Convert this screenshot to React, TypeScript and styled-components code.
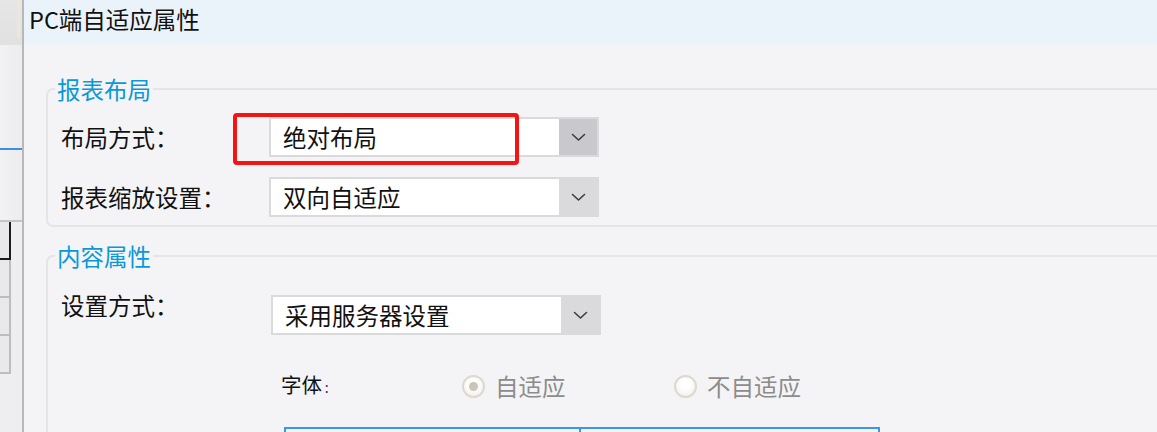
import React from "react";
import styled, { createGlobalStyle } from "styled-components";

const GlobalStyle = createGlobalStyle`
  html, body {
    margin: 0;
    padding: 0;
    width: 1157px;
    height: 432px;
    overflow: hidden;
    background: #f4f4f6;
  }
  body {
    font-family: "Noto Sans CJK SC", "Noto Sans", sans-serif;
  }
  #root {
    height: 100%;
  }
`;

const Page = styled.div`
  display: flex;
  width: 1157px;
  height: 432px;
  overflow: hidden;
`;

/* ---------- background application strip on the left ---------- */
const LeftStrip = styled.div`
  width: 22px;
  flex-shrink: 0;
  display: flex;
  flex-direction: column;
  background: #eeeef0;
`;

const StripTop = styled.div`
  height: 45px;
  display: flex;
  padding-left: 17px;
  background: linear-gradient(#e6e6e6, #e1e1e1);
  box-sizing: border-box;
`;

const TanMark = styled.div`
  width: 3px;
  height: 38px;
  background: #ece7d7;
`;

const StripPane = styled.div<{ $h: number }>`
  height: ${(p) => p.$h}px;
  background: linear-gradient(90deg, #f2f2f3, #ececee);
`;

const StripRule = styled.div<{ $color: string }>`
  height: 2px;
  background: ${(p) => p.$color};
`;

const StripCells = styled.div`
  display: flex;
  flex-direction: column;
  width: 11px;
`;

const StripCell = styled.div<{ $dark?: boolean }>`
  height: 38px;
  box-sizing: border-box;
  border-right: 2px solid ${(p) => (p.$dark ? "#1c1c1c" : "#bdbdbf")};
  border-bottom: 2px solid ${(p) => (p.$dark ? "#1c1c1c" : "#bdbdbf")};
  background: #e9e9eb;
`;

/* ---------- dialog ---------- */
const Dialog = styled.div`
  flex: 1;
  display: flex;
  flex-direction: column;
  border-left: 2px solid #b8b8ba;
  background: #f4f4f6;
  min-width: 0;
`;

const TitleBar = styled.div`
  height: 45px;
  flex-shrink: 0;
  box-sizing: border-box;
  padding: 6px 0 0 5px;
  background: #ebf3fa;
  font-size: 23.5px;
  line-height: 26px;
  color: #111;
`;

const Body = styled.div`
  display: flex;
  flex-direction: column;
  padding: 31px 0 0 22px;
`;

const GroupBox = styled.fieldset<{ $pt: number; $pb: number; $mt: number }>`
  margin: ${(p) => p.$mt}px 0 0 0;
  min-width: 0;
  border: 2px solid #e5e5e8;
  border-right: none;
  border-radius: 7px 0 0 7px;
  padding: ${(p) => p.$pt}px 0 ${(p) => p.$pb}px 13px;
  display: flex;
  flex-direction: column;
`;

const Legend = styled.legend`
  margin-left: -6px;
  padding: 0 2px;
  font-size: 23.5px;
  line-height: 26px;
  color: #0a98d8;
`;

const FormRow = styled.div<{ $labelWidth: number; $gap?: number; $top?: boolean }>`
  display: grid;
  grid-template-columns: ${(p) => p.$labelWidth}px 330px;
  align-items: ${(p) => (p.$top ? "start" : "center")};
  margin-top: ${(p) => p.$gap ?? 0}px;
`;

const Label = styled.div<{ $shift?: number }>`
  font-size: 23.5px;
  line-height: 26px;
  color: #111;
  white-space: nowrap;
  margin-top: ${(p) => p.$shift ?? 0}px;
`;

const Combo = styled.div`
  position: relative;
  display: flex;
  height: 40px;
  box-sizing: border-box;
  border: 2px solid #dadadd;
  background: #fff;
`;

const ComboText = styled.div`
  flex: 1;
  padding-left: 12px;
  font-size: 23.5px;
  line-height: 36px;
  color: #111;
  white-space: nowrap;
`;

const ComboButton = styled.div<{ $active?: boolean }>`
  width: 38px;
  display: flex;
  align-items: center;
  justify-content: center;
  background: ${(p) => (p.$active ? "#c9c9cd" : "#dadadd")};
`;

/* annotation drawn over the first combo box */
const RedMark = styled.div`
  position: absolute;
  left: -38px;
  top: -6px;
  width: 286px;
  height: 52px;
  box-sizing: border-box;
  border: 4px solid #f51414;
  border-radius: 4px;
  pointer-events: none;
`;

const FontRow = styled.div`
  display: flex;
  align-items: center;
  height: 26px;
  margin: 38px 0 0 220px;
`;

const FontLabel = styled.div`
  width: 181px;
  font-size: 20.5px;
  line-height: 26px;
  color: #111;
`;

const Colon = styled.span`
  color: #6a2c6a;
  font-family: "DejaVu Sans", sans-serif;
  font-size: 16px;
  margin-left: 2px;
`;

const RadioItem = styled.div`
  width: 212px;
  display: flex;
  align-items: center;
  gap: 10px;
`;

const RadioCircle = styled.div<{ $checked?: boolean }>`
  width: 23px;
  height: 23px;
  box-sizing: border-box;
  border-radius: 50%;
  border: 2px solid #ddd9ce;
  background: radial-gradient(circle at 50% 40%, #ffffff 30%, #ecebe6 100%);
  display: flex;
  align-items: center;
  justify-content: center;
  &::after {
    content: "";
    display: ${(p) => (p.$checked ? "block" : "none")};
    width: 9px;
    height: 9px;
    border-radius: 50%;
    background: #c9c5b9;
  }
`;

const RadioText = styled.span`
  font-size: 23.5px;
  line-height: 26px;
  color: #8c8c8c;
  white-space: nowrap;
`;

const Table = styled.div`
  margin: 28px 0 0 223px;
  width: 596px;
  height: 60px;
  box-sizing: border-box;
  border: 2px solid #3d94ec;
  border-bottom: none;
  display: grid;
  grid-template-columns: 295px 1fr;
`;

const TableCell = styled.div<{ $divider?: boolean }>`
  border-right: ${(p) => (p.$divider ? "2px solid #3d94ec" : "none")};
  background: #f4f4f6;
`;

const Chevron = () => (
  <svg width="15" height="9" viewBox="0 0 15 9" fill="none">
    <polyline
      points="1.5,1.5 7.5,7 13.5,1.5"
      stroke="#3c3c40"
      strokeWidth="1.6"
      strokeLinecap="round"
      strokeLinejoin="round"
    />
  </svg>
);

export default function App() {
  return (
    <>
      <GlobalStyle />
      <Page>
        <LeftStrip>
          <StripTop>
            <TanMark />
          </StripTop>
          <StripPane $h={103} />
          <StripRule $color="#3d8ee4" />
          <StripPane $h={70} />
          <StripRule $color="#c4c4c6" />
          <StripCells>
            <StripCell $dark />
            <StripCell />
            <StripCell />
            <StripCell />
          </StripCells>
        </LeftStrip>

        <Dialog>
          <TitleBar>PC端自适应属性</TitleBar>
          <Body>
            <GroupBox $pt={15} $pb={8} $mt={0}>
              <Legend>报表布局</Legend>
              <FormRow $labelWidth={208}>
                <Label>布局方式：</Label>
                <Combo>
                  <ComboText>绝对布局</ComboText>
                  <ComboButton $active>
                    <Chevron />
                  </ComboButton>
                  <RedMark />
                </Combo>
              </FormRow>
              <FormRow $labelWidth={208} $gap={20}>
                <Label>报表缩放设置：</Label>
                <Combo>
                  <ComboText>双向自适应</ComboText>
                  <ComboButton>
                    <Chevron />
                  </ComboButton>
                </Combo>
              </FormRow>
            </GroupBox>

            <GroupBox $pt={26} $pb={60} $mt={16}>
              <Legend>内容属性</Legend>
              <FormRow $labelWidth={210} $top>
                <Label $shift={-3}>设置方式：</Label>
                <Combo>
                  <ComboText>采用服务器设置</ComboText>
                  <ComboButton>
                    <Chevron />
                  </ComboButton>
                </Combo>
              </FormRow>
              <FontRow>
                <FontLabel>
                  字体<Colon>:</Colon>
                </FontLabel>
                <RadioItem>
                  <RadioCircle $checked />
                  <RadioText>自适应</RadioText>
                </RadioItem>
                <RadioItem>
                  <RadioCircle />
                  <RadioText>不自适应</RadioText>
                </RadioItem>
              </FontRow>
              <Table>
                <TableCell $divider />
                <TableCell />
              </Table>
            </GroupBox>
          </Body>
        </Dialog>
      </Page>
    </>
  );
}
